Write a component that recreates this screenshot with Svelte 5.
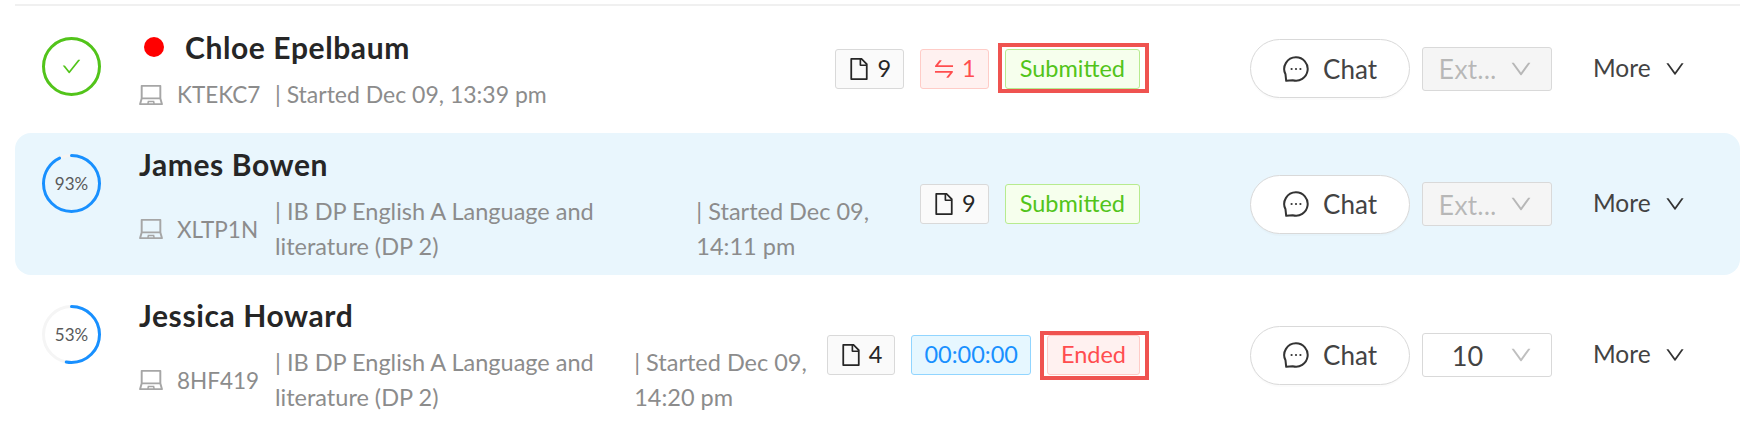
<script>
  const icons = {
    file: "M854.6 288.6L639.4 73.4c-6-6-14.1-9.4-22.6-9.4H192c-17.7 0-32 14.3-32 32v832c0 17.7 14.3 32 32 32h640c17.7 0 32-14.3 32-32V311.3c0-8.5-3.4-16.7-9.4-22.7zM790.2 326H602V137.8L790.2 326zm1.8 562H232V136h302v216a42 42 0 0 0 42 42h216v494z",
    swap: "M847.9 592H152c-4.4 0-8 3.6-8 8v60c0 4.4 3.6 8 8 8h605.2L612.9 851c-4.1 5.2-.4 13 6.3 13h72.5c4.9 0 9.5-2.2 12.6-6.1l168.8-214.1c16.5-21 1.6-51.8-25.2-51.8zM872 356H266.8l144.3-183c4.1-5.2.4-13-6.3-13h-72.5c-4.9 0-9.5 2.2-12.6 6.1L150.9 380.2c-16.5 21-1.6 51.8 25.1 51.8h696c4.4 0 8-3.6 8-8v-60c0-4.4-3.6-8-8-8z",
    laptop: "M956.9 845.1L896.4 632V168c0-17.7-14.3-32-32-32h-704c-17.7 0-32 14.3-32 32v464L67.9 845.1C60.4 866 75.8 888 98 888h828.8c22.2 0 37.6-22 30.1-42.9zM200.4 208h624v395h-624V208zm228.3 608l8.1-37h150.3l8.1 37H428.7zm224 0l-19.1-86.7c-.8-3.7-4.1-6.3-7.8-6.3H398.2c-3.8 0-7 2.6-7.8 6.3L371.3 816H151l42.3-149h638.2l42.3 149H652.7z",
    down: "M884 256h-75c-5.1 0-9.9 2.5-12.9 6.6L512 654.2 227.9 262.6c-3-4.1-7.8-6.6-12.9-6.6h-75c-6.5 0-10.3 7.4-6.5 12.7l352.6 486.1c12.8 17.6 39 17.6 51.7 0l352.6-486.1c3.9-5.3.1-12.7-6.4-12.7z",
    check: "M912 190h-69.9c-9.8 0-19.1 4.5-25.1 12.2L404.7 724.5 207 474a32 32 0 0 0-25.1-12.2H112c-6.7 0-10.4 7.7-6.3 12.9l273.9 347c12.8 16.2 37.4 16.2 50.3 0l488.4-618.9c4.1-5.1.4-12.8-6.3-12.8z"
  };

  const students = [
    { name: "Chloe Epelbaum", online: true, done: true, percent: 100, code: "KTEKC7", started: "| Started Dec 09, 13:39 pm",
      files: 9, swaps: 1, status: "Submitted", mark: "tight", extend: "Ext...", disabled: true },
    { name: "James Bowen", percent: 93, code: "XLTP1N", subject: "| IB DP English A Language and literature (DP 2)", started: "| Started Dec 09, 14:11 pm",
      files: 9, status: "Submitted", extend: "Ext...", disabled: true, active: true },
    { name: "Jessica Howard", percent: 53, code: "8HF419", subject: "| IB DP English A Language and literature (DP 2)", started: "| Started Dec 09, 14:20 pm",
      files: 4, timer: "00:00:00", status: "Ended", mark: "loose", extend: "10" }
  ];
</script>

{#snippet icon(d, cls)}
  <svg class={cls} viewBox="64 64 896 896" fill="currentColor" aria-hidden="true"><path {d} /></svg>
{/snippet}

<div class="list">
  {#each students as s}
    <div class="row" class:active={s.active}>
      <div class="progress" class:done={s.done}>
        <svg class="ring" viewBox="0 0 59 59">
          <circle class="trail" cx="29.5" cy="29.5" r="28" />
          <circle class="bar" cx="29.5" cy="29.5" r="28" pathLength="100" stroke-dasharray="{s.percent} 100" />
        </svg>
        <span class="label">
          {#if s.done}
            {@render icon(icons.check, "check")}
          {:else}
            {s.percent}%
          {/if}
        </span>
      </div>

      <div class="info">
        <div class="name">
          {#if s.online}<span class="dot"></span>{/if}
          {s.name}
        </div>
        <div class="meta">
          <div class="device">
            {@render icon(icons.laptop, "laptop")}
            <span class="code">{s.code}</span>
          </div>
          {#if s.subject}
            <div class="details">
              <div class="subject">{s.subject}</div>
              <div>{s.started}</div>
            </div>
          {:else}
            <div class="solo">{s.started}</div>
          {/if}
        </div>
      </div>

      <div class="tags">
        <span class="tag">{@render icon(icons.file, "tag-icon")} {s.files}</span>
        {#if s.swaps}
          <span class="tag red">{@render icon(icons.swap, "tag-icon")} {s.swaps}</span>
        {/if}
        {#if s.timer}
          <span class="tag blue">{s.timer}</span>
        {/if}
        <span class="status">
          <span class="tag" class:green={s.status === "Submitted"} class:ended={s.status === "Ended"}>{s.status}</span>
          {#if s.mark}<span class="marker {s.mark}"></span>{/if}
        </span>
      </div>

      <div class="actions">
        <button class="chat">
          <svg class="chat-icon" viewBox="0 0 26 26" aria-hidden="true">
            <path d="M13 1.3a11.7 11.7 0 1 1-3.4 22.9L3.2 24.8 2.5 18.3A11.7 11.7 0 0 1 13 1.3z" fill="none" stroke="currentColor" stroke-width="2" stroke-linejoin="round" />
            <circle cx="8.6" cy="13" r="1.1" fill="currentColor" />
            <circle cx="13" cy="13" r="1.1" fill="currentColor" />
            <circle cx="17.4" cy="13" r="1.1" fill="currentColor" />
          </svg>
          Chat
        </button>
        <div class="select" class:disabled={s.disabled}>
          <span class="value">{s.extend}</span>
          {@render icon(icons.down, "select-arrow")}
        </div>
        <div class="more"><span class="more-text">More</span> {@render icon(icons.down, "more-arrow")}</div>
      </div>
    </div>
  {/each}
</div>

<style>
  :global(body) {
    background: #fff;
    font-family: Lato, "Noto Sans", sans-serif;
  }

  .list {
    margin: 4px 4px 0 15px;
    border-top: 2px solid #f0f0f0;
  }

  .row {
    display: flex;
    align-items: center;
    padding: 21px 0 21px 27px;
  }

  .row:first-child .tags,
  .row:first-child .actions {
    margin-bottom: 2px;
  }

  .row:last-child {
    padding-top: 20px;
  }

  .row.active {
    padding-top: 11px;
    padding-bottom: 11px;
    background: #e9f6fd;
    border-radius: 16px;
  }

  .progress {
    position: relative;
    align-self: flex-start;
    flex: none;
    width: 59px;
    height: 59px;
    margin-top: 10px;
    margin-right: 38px;
  }

  .ring {
    display: block;
    width: 59px;
    height: 59px;
    transform: rotate(-90deg);
  }

  .trail,
  .bar {
    fill: none;
    stroke-width: 3;
  }

  .trail {
    stroke: #f5f5f5;
  }

  .bar {
    stroke: #1890ff;
    stroke-linecap: round;
  }

  .done .bar {
    stroke: #52c41a;
  }

  .label {
    position: absolute;
    inset: 0;
    display: flex;
    align-items: center;
    justify-content: center;
    font-size: 17px;
    color: #595959;
  }

  .check {
    width: 19px;
    height: 19px;
    color: #52c41a;
  }

  .info {
    flex: 1;
    min-width: 0;
    padding-right: 13px;
  }

  .name {
    display: flex;
    align-items: center;
    height: 40px;
    font-size: 30px;
    font-weight: 700;
    letter-spacing: 0.6px;
    color: #262626;
  }

  .dot {
    width: 20px;
    height: 20px;
    margin: 0 21px 0 5px;
    border-radius: 50%;
    background: #f00;
  }

  .meta {
    display: flex;
    align-items: center;
    margin-top: 10px;
    font-size: 23.5px;
    line-height: 35px;
    color: #8c8c8c;
  }

  .device {
    display: flex;
    align-items: center;
    flex: none;
    width: 136px;
  }

  .laptop {
    width: 24px;
    height: 24px;
    margin-right: 14px;
    color: #a6a6a6;
  }

  .code {
    font-size: 22.5px;
  }

  .details {
    display: grid;
    grid-template-columns: minmax(0, 2fr) minmax(0, 1fr);
    flex: 1;
    min-width: 0;
  }

  .subject {
    padding-right: 16px;
  }

  .solo {
    font-size: 23px;
    white-space: nowrap;
  }

  .tags {
    display: flex;
    align-items: center;
    flex: none;
    gap: 16px;
    margin-right: 110px;
  }

  .tag {
    display: flex;
    align-items: center;
    justify-content: center;
    gap: 7px;
    box-sizing: border-box;
    height: 40px;
    padding: 0 12px 2px;
    border: 1px solid #d9d9d9;
    border-radius: 3px;
    background: #fafafa;
    font-size: 23.5px;
    color: #262626;
  }

  .tag.red,
  .tag.ended {
    border-color: #ffccc7;
    background: #fff1f0;
    color: #ff4d4f;
  }

  .tag.ended {
    padding: 0 13px 2px;
  }

  .tag.green {
    padding: 0 14px 2px;
    border-color: #b7eb8f;
    background: #f6ffed;
    color: #52c41a;
  }

  .tag.blue {
    border-color: #91d5ff;
    background: #e6f7ff;
    color: #1890ff;
  }

  .tag-icon {
    width: 22px;
    height: 22px;
    margin-top: 2px;
  }

  .status {
    position: relative;
    display: block;
  }

  .marker {
    position: absolute;
    left: -7px;
    right: -9px;
    border: 4px solid #ef5350;
  }

  .marker.tight {
    top: -6px;
    bottom: -4px;
  }

  .marker.loose {
    top: -4px;
    bottom: -5px;
  }

  .actions {
    display: flex;
    align-items: center;
    flex: none;
    width: 490px;
  }

  .chat {
    display: flex;
    align-items: center;
    justify-content: center;
    gap: 14px;
    box-sizing: border-box;
    width: 160px;
    height: 59px;
    padding: 0;
    border: 1px solid #d9d9d9;
    border-radius: 30px;
    background: #fff;
    box-shadow: 0 2px 0 rgba(0, 0, 0, 0.015);
    font: inherit;
    font-size: 26px;
    color: #434343;
  }

  .chat-icon {
    width: 26px;
    height: 26px;
    color: #333;
  }

  .select {
    display: flex;
    align-items: center;
    box-sizing: border-box;
    width: 130px;
    height: 44px;
    margin-left: 12px;
    padding: 0 19px 0 12px;
    border: 1px solid #d9d9d9;
    border-radius: 3px;
    background: #fff;
    font-size: 27px;
    color: #434343;
  }

  .select.disabled {
    background: #f5f5f5;
    color: rgba(0, 0, 0, 0.25);
  }

  .value {
    flex: 1;
    text-align: center;
  }

  .select-arrow {
    width: 22px;
    height: 22px;
    margin-left: 10px;
    color: rgba(0, 0, 0, 0.25);
  }

  .more {
    display: flex;
    align-items: center;
    gap: 14px;
    margin-left: 41px;
    font-size: 24.5px;
    color: #434343;
  }

  .more-text {
    padding-bottom: 3px;
  }

  .more-arrow {
    width: 20px;
    height: 20px;
    color: #333;
  }
</style>
